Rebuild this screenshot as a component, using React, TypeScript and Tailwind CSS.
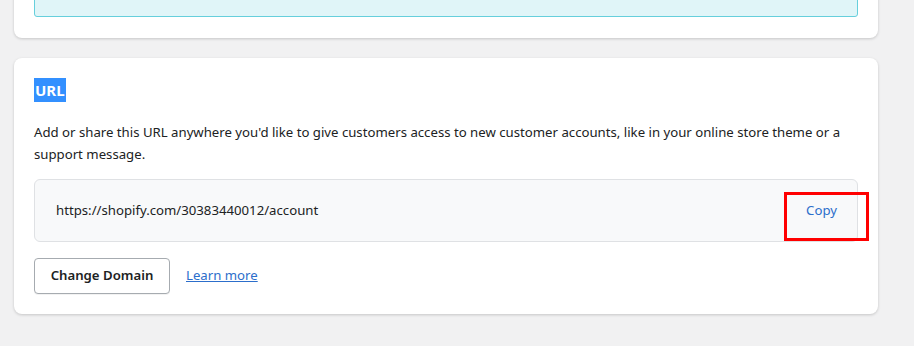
export default function App() {
  return (
    <div
      className="min-h-[346px] w-[914px] overflow-hidden bg-[#f1f1f2] pl-[14px] pr-[36px] text-[#202223]"
      style={{ fontFamily: '"Noto Sans", "Open Sans", sans-serif' }}
    >
      {/* previous card, cut off at the top */}
      <div className="-mt-[12px] rounded-b-[8px] bg-white px-[20px] pb-[21px] shadow-[0_1px_3px_rgba(0,0,0,0.18)]">
        <div className="h-[29px] rounded-b-[3px] border border-[#66cfdc] bg-[#e0f5f8]" />
      </div>

      {/* URL card */}
      <div className="mt-[20px] rounded-[8px] bg-white p-[20px] shadow-[0_1px_3px_rgba(0,0,0,0.18)]">
        <h2 className="h-[24px] text-[15px] font-bold leading-[24px]">
          <span className="inline-block bg-[#3390ff] px-px text-white">URL</span>
        </h2>
        <p className="mt-[19px] text-[13.2px] leading-[22px]">
          Add or share this URL anywhere you'd like to give customers access to new customer accounts, like in your online
          store theme or a support message.
        </p>

        <div className="relative mt-[14px] flex h-[63px] items-center justify-between rounded-[6px] border border-[#dfe1e4] bg-[#f8f9fa] pl-[21px] pr-[20px]">
          <span className="text-[13.2px]">https://shopify.com/30383440012/account</span>
          <button className="text-[13.2px] text-[#2c6ecb]">Copy</button>
          {/* annotation box */}
          <div className="pointer-events-none absolute right-[-12px] top-[12px] h-[49px] w-[85px] border-[3px] border-[#ff0000]" />
        </div>

        <div className="mt-[16px] flex items-center gap-[16px]">
          <button className="h-[36px] w-[136px] rounded-[4px] border border-[#a6abb0] bg-white text-[13.2px] font-semibold shadow-[0_1px_0_rgba(0,0,0,0.05)]">
            Change Domain
          </button>
          <a href="#" className="text-[13.2px] text-[#2c6ecb] underline">
            Learn more
          </a>
        </div>
      </div>
    </div>
  );
}
